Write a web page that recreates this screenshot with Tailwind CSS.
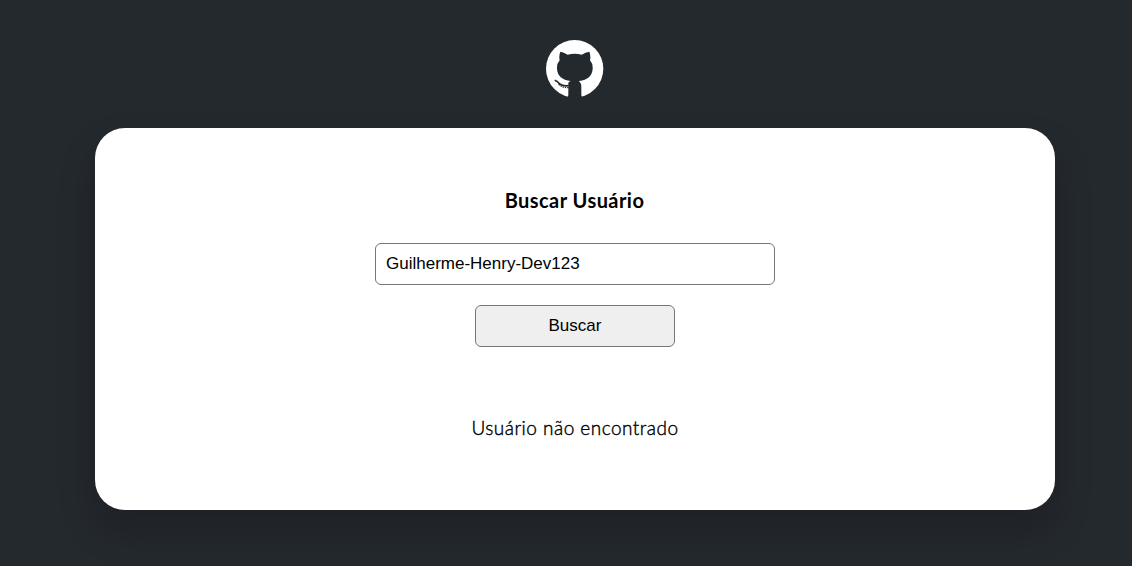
<!DOCTYPE html>
<html lang="pt-BR">
<head>
<meta charset="utf-8">
<title>Buscar Usuário</title>
<script src="https://cdn.jsdelivr.net/npm/@tailwindcss/browser@4"></script>
</head>
<body class="h-[566px] overflow-hidden bg-[#24292d] text-black">
<div class="flex w-[1150px] flex-col items-center pt-10">
  <svg class="mr-px h-[57px] w-[58px] shrink-0" viewBox="35 30 174 171" aria-label="GitHub">
    <circle cx="121" cy="116" r="86" fill="#fff"/>
    <path fill="#24292d" d="M97 204Q102 199 102 194V158Q104 155 109 153Q70 148 68 116Q67 101 76 91Q73 77 78 65Q88 66 100 74Q121 69 142 74Q154 66 165 65Q170 77 167 91Q176 101 175 116Q173 148 134 153Q141 160 141 170V194Q141 199 146 204Z"/>
    <path d="M61 151Q70 154 76 162Q85 169 103 167" fill="none" stroke="#24292d" stroke-width="5"/>
    <path d="M73 163Q85 174 103 173" fill="none" stroke="#24292d" stroke-width="4" stroke-dasharray="4 3"/>
  </svg>
  <main class="mt-[31px] flex h-[382px] w-[960px] flex-col items-center rounded-[30px] bg-white pt-[57px] shadow-[0_20px_36px_rgba(10,7,12,0.21)]">
    <h1 class="mr-px font-[Lato,sans-serif] text-[20px] leading-[30px] font-bold tracking-[0.45px] whitespace-nowrap">Buscar Usuário</h1>
    <input class="mt-[28px] h-[42px] w-[400px] rounded-[6px] border border-[#767676] bg-white px-2.5 font-['Liberation_Sans',sans-serif] text-[17px]" type="text" value="Guilherme-Henry-Dev123">
    <button class="mt-5 h-[42px] w-[200px] rounded-[6px] border border-[#767676] bg-[#efefef] font-['Liberation_Sans',sans-serif] text-[17px]">Buscar</button>
    <p class="mt-[66px] font-[Lato,sans-serif] text-[19px] leading-[30px] font-light tracking-[0.48px] whitespace-nowrap [-webkit-text-stroke:0.4px_black]">Usuário não encontrado</p>
  </main>
</div>
</body>
</html>
